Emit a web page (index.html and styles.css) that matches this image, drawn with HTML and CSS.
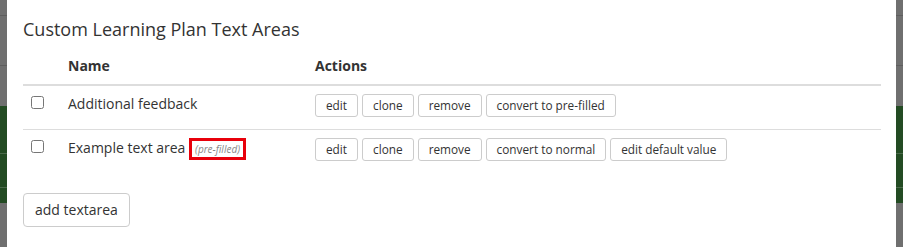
FILE: index.html
```html
<!DOCTYPE html>
<html>
<head>
<meta charset="utf-8">
<title>Custom Learning Plan Text Areas</title>
<link rel="stylesheet" href="styles.css">
</head>
<body>
<div class="modal">
  <h4 class="title">Custom Learning Plan Text Areas</h4>
  <table class="tbl">
    <thead>
      <tr>
        <th class="c-check"></th>
        <th class="c-name">Name</th>
        <th>Actions</th>
      </tr>
    </thead>
    <tbody>
      <tr class="row-first">
        <td class="c-check"><input type="checkbox" class="chk"></td>
        <td class="c-name">Additional feedback</td>
        <td>
          <div class="actions">
            <button class="btn-sm">edit</button>
            <button class="btn-sm">clone</button>
            <button class="btn-sm">remove</button>
            <button class="btn-sm">convert to pre-filled</button>
          </div>
        </td>
      </tr>
      <tr>
        <td class="c-check"><input type="checkbox" class="chk"></td>
        <td class="c-name">Example text area <span class="badge">(pre-filled)</span></td>
        <td>
          <div class="actions">
            <button class="btn-sm">edit</button>
            <button class="btn-sm">clone</button>
            <button class="btn-sm">remove</button>
            <button class="btn-sm">convert to normal</button>
            <button class="btn-sm">edit default value</button>
          </div>
        </td>
      </tr>
    </tbody>
  </table>
  <button class="btn">add textarea</button>
</div>
</body>
</html>
```
FILE: styles.css
```css
html, body {
  margin: 0;
  height: 247px;
  overflow: hidden;
}
body {
  padding: 0 7px;
  font-family: "Open Sans", "DejaVu Sans", sans-serif;
  font-size: 14px;
  color: #333;
  background: linear-gradient(to bottom,
    #6f6f6f 0, #6f6f6f 15px,
    #5e5e5e 15px, #5e5e5e 16px,
    #6f6f6f 16px, #6f6f6f 65px,
    #5e5e5e 65px, #5e5e5e 66px,
    #6f6f6f 66px, #6f6f6f 106px,
    #234b23 106px, #234b23 153px,
    #4b6a4b 153px, #4b6a4b 154px,
    #234b23 154px, #234b23 187px,
    #4b6a4b 187px, #4b6a4b 188px,
    #234b23 188px, #234b23 203px,
    #6f6f6f 203px);
}
.modal {
  background: #fff;
  height: 247px;
  padding: 17px 15px 0 16px;
  box-sizing: border-box;
}
.title {
  margin: 0 0 7px;
  font-size: 18px;
  font-weight: 400;
  line-height: 24px;
  color: #333;
}
.tbl {
  width: 100%;
  border-collapse: collapse;
  margin-bottom: 20px;
}
.tbl th {
  text-align: left;
  font-weight: 700;
  padding: 8px;
  line-height: 20px;
  border-bottom: 2px solid #ddd;
}
.tbl td {
  padding: 8px 8px 12px;
  line-height: 20px;
  vertical-align: top;
  border-top: 1px solid #ddd;
}
.tbl .row-first td {
  border-top: 0;
}
.c-check {
  width: 21px;
}
.c-name {
  width: 231px;
}
.chk {
  display: block;
  width: 13px;
  height: 13px;
  margin: 2px 0 0 0;
}
.actions {
  display: flex;
  gap: 4px;
}
.btn-sm {
  font-family: "Open Sans", "DejaVu Sans", sans-serif;
  font-size: 11.8px;
  line-height: 17px;
  color: #333;
  background: #fff;
  border: 1px solid #ccc;
  border-radius: 3px;
  padding: 2px 10px;
  margin: 0;
}
.badge {
  display: inline-block;
  border: 3px solid #e8000b;
  padding: 0 3px;
  font-size: 10px;
  line-height: 16px;
  font-style: italic;
  font-weight: 400;
  color: #888;
  vertical-align: 0;
  margin-left: 0;
}
.btn {
  font-family: "Open Sans", "DejaVu Sans", sans-serif;
  font-size: 14px;
  line-height: 20px;
  color: #333;
  background: #fff;
  border: 1px solid #ccc;
  border-radius: 4px;
  padding: 6px 11px;
  margin: 0;
}
```
